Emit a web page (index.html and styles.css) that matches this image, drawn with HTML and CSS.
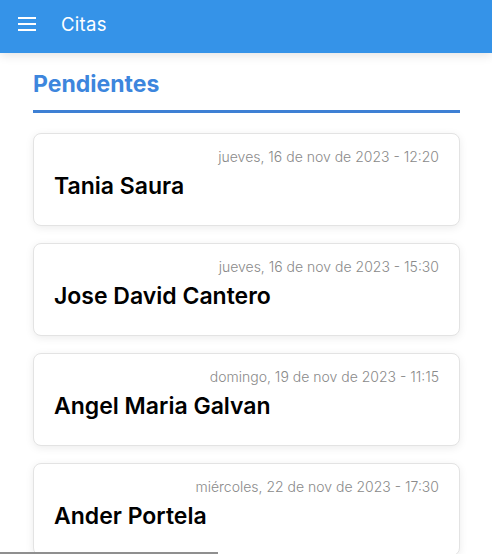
FILE: index.html
```html
<!DOCTYPE html>
<html lang="es">
<head>
<meta charset="utf-8">
<link rel="stylesheet" href="styles.css">
</head>
<body>
<header class="topbar">
  <svg class="menu" width="18" height="14" viewBox="0 0 18 14"><rect x="0" y="0" width="18" height="2" fill="#fff"/><rect x="0" y="6" width="18" height="2" fill="#fff"/><rect x="0" y="12" width="18" height="2" fill="#fff"/></svg>
  <span class="title">Citas</span>
</header>
<main class="content">
  <h1 class="section">Pendientes</h1>
  <div class="list">
    <div class="card"><div class="date">jueves, 16 de nov de 2023 - 12:20</div><div class="name">Tania Saura</div></div>
    <div class="card"><div class="date">jueves, 16 de nov de 2023 - 15:30</div><div class="name">Jose David Cantero</div></div>
    <div class="card"><div class="date">domingo, 19 de nov de 2023 - 11:15</div><div class="name">Angel Maria Galvan</div></div>
    <div class="card"><div class="date">miércoles, 22 de nov de 2023 - 17:30</div><div class="name">Ander Portela</div></div>
  </div>
</main>
<div class="scrollbar"></div>
</body>
</html>
```
FILE: styles.css
```css
html, body { margin: 0; padding: 0; }
body { background: #fff; width: 492px; height: 554px; overflow: hidden; font-family: Inter, "Noto Sans", sans-serif; position: relative; }
.topbar { height: 53px; background: #3593e8; display: flex; align-items: center; padding-left: 18px; box-shadow: 0 2px 10px rgba(0,0,0,0.12); position: relative; z-index: 2; }
.menu { display: block; margin-top: -5px; }
.title { color: #fff; font-size: 18.5px; font-weight: 400; margin-left: 25px; margin-top: -6px; letter-spacing: 0.3px; }
.content { padding: 16px 32px 0 33px; }
.section { margin: 0; font-size: 23px; font-weight: 700; color: #3d86dd; padding-bottom: 11px; border-bottom: 3px solid #3e80d4; line-height: 30px; }
.list { display: flex; flex-direction: column; gap: 17px; margin-top: 20px; }
.card { height: 93px; box-sizing: border-box; border: 1px solid #e3e3e3; border-radius: 8px; box-shadow: 0 2px 8px rgba(0,0,0,0.08); padding: 14px 20px 0 20px; background: #fff; }
.date { text-align: right; color: #8a8a8a; font-size: 14px; font-weight: 300; line-height: 18px; }
.name { font-size: 23px; font-weight: 600; color: #000; margin-top: 6px; line-height: 28px; }
.scrollbar { position: absolute; left: 0; bottom: 0; width: 218px; height: 2px; background: #8f8f8f; }
```
